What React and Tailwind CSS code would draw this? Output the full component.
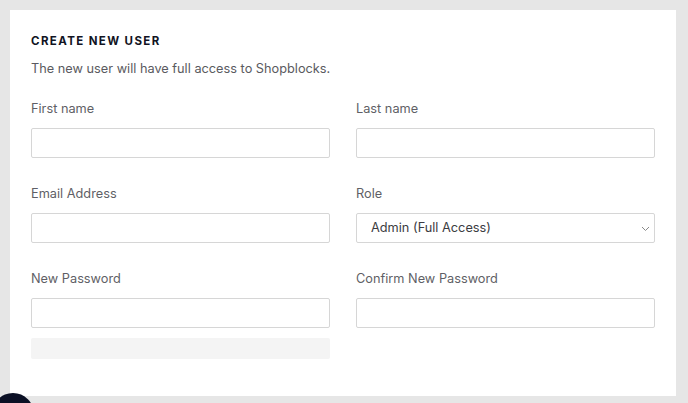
import React from 'react'

function Field({ label, children }) {
  return (
    <div className="flex flex-col">
      <label className="text-[12.75px] leading-[20px] text-[#5f5f66] mb-[9px]">{label}</label>
      {children}
    </div>
  )
}

function TextInput({ type = 'text' }) {
  return (
    <input
      type={type}
      className="h-[30px] w-full border border-[#d6d6d6] rounded-[2px] bg-white px-3 text-[13px] outline-none"
    />
  )
}

export default function App() {
  return (
    <div
      className="relative h-[403px] w-[688px] overflow-hidden bg-[#e6e6e6] pt-[10px] pl-[10px]"
      style={{ fontFamily: 'Inter, "Noto Sans", sans-serif' }}
    >
      <div className="w-[666px] h-[386px] bg-white px-[21px] pt-[22px]">
        <h2 className="text-[11.5px] leading-[18px] font-bold tracking-[0.12em] text-[#111322]">CREATE NEW USER</h2>
        <p className="mt-[9px] text-[12.75px] leading-[20px] text-[#5a5a60]">
          The new user will have full access to Shopblocks.
        </p>

        <div className="mt-[20px] grid grid-cols-2 gap-x-[26px] gap-y-[26px] w-[624px]">
          <Field label="First name">
            <TextInput />
          </Field>
          <Field label="Last name">
            <TextInput />
          </Field>
          <Field label="Email Address">
            <TextInput type="email" />
          </Field>
          <Field label="Role">
            <div className="relative">
              <select
                defaultValue="admin"
                className="h-[30px] w-full appearance-none border border-[#d6d6d6] rounded-[2px] bg-white pl-[14px] pr-8 text-[12.75px] text-[#3c3c42] outline-none"
              >
                <option value="admin">Admin (Full Access)</option>
              </select>
              <svg
                className="pointer-events-none absolute right-[5px] top-[13px]"
                width="9"
                height="6"
                viewBox="0 0 9 6"
                fill="none"
              >
                <path d="M1 1l3.5 3.5L8 1" stroke="#8a8a8a" strokeWidth="1" />
              </svg>
            </div>
          </Field>
          <Field label="New Password">
            <TextInput type="password" />
            <div className="mt-[10px] h-[21px] bg-[#f4f4f4] rounded-[2px]" />
          </Field>
          <Field label="Confirm New Password">
            <TextInput type="password" />
          </Field>
        </div>
      </div>

      <div className="absolute left-[-8px] top-[393px] h-[42px] w-[42px] rounded-full bg-[#0b1025]" />
    </div>
  )
}
